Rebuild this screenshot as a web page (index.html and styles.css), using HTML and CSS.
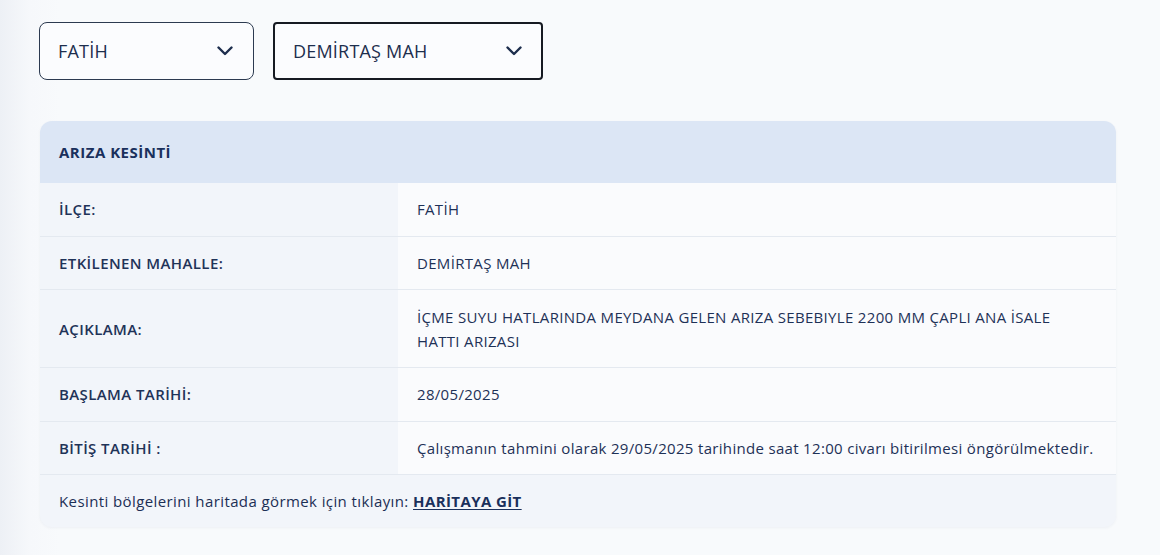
FILE: index.html
```html
<!DOCTYPE html>
<html lang="tr">
<head>
<meta charset="utf-8">
<title>Arıza Kesinti</title>
<link rel="stylesheet" href="styles.css">
</head>
<body>
<main class="page">
  <div class="filters">
    <div class="select select-district">
      <span class="select-value">FATİH</span>
      <svg class="chevron" viewBox="0 0 16 10" width="16" height="10"><path d="M1.5 1.5 L8 8 L14.5 1.5" fill="none" stroke="#1d2e4d" stroke-width="2.4" stroke-linecap="round" stroke-linejoin="round"/></svg>
    </div>
    <div class="select select-hood">
      <span class="select-value">DEMİRTAŞ MAH</span>
      <svg class="chevron" viewBox="0 0 16 10" width="16" height="10"><path d="M1.5 1.5 L8 8 L14.5 1.5" fill="none" stroke="#1d2e4d" stroke-width="2.4" stroke-linecap="round" stroke-linejoin="round"/></svg>
    </div>
  </div>

  <section class="card">
    <div class="card-head">ARIZA KESİNTİ</div>
    <div class="row">
      <div class="label">İLÇE:</div>
      <div class="value">FATİH</div>
    </div>
    <div class="row">
      <div class="label">ETKİLENEN MAHALLE:</div>
      <div class="value">DEMİRTAŞ MAH</div>
    </div>
    <div class="row row-tall">
      <div class="label">AÇIKLAMA:</div>
      <div class="value">İÇME SUYU HATLARINDA MEYDANA GELEN ARIZA SEBEBIYLE 2200 MM ÇAPLI ANA İSALE HATTI ARIZASI</div>
    </div>
    <div class="row">
      <div class="label">BAŞLAMA TARİHİ:</div>
      <div class="value">28/05/2025</div>
    </div>
    <div class="row">
      <div class="label">BİTİŞ TARİHİ :</div>
      <div class="value">Çalışmanın tahmini olarak 29/05/2025 tarihinde saat 12:00 civarı bitirilmesi öngörülmektedir.</div>
    </div>
    <div class="card-foot">Kesinti bölgelerini haritada görmek için tıklayın: <a class="map-link" href="#">HARİTAYA GİT</a></div>
  </section>
</main>
</body>
</html>
```

FILE: styles.css
```css
html, body {
  margin: 0;
  height: 100%;
}

body {
  background: linear-gradient(90deg, #edf0f5 0px, #f6f8fb 30px, #f8fafc 60px);
  font-family: "Open Sans", "Noto Sans", sans-serif;
  color: #1c2f55;
}

.page {
  padding: 22px 44px 0 39px;
}

.filters {
  display: flex;
  gap: 19px;
}

.select {
  box-sizing: border-box;
  height: 58px;
  display: flex;
  align-items: center;
  justify-content: space-between;
  background: #fbfcfe;
  font-size: 18px;
  letter-spacing: 0.2px;
  color: #1d2e4d;
}

.select-district {
  width: 215px;
  border: 1px solid #2c3a50;
  border-radius: 8px;
  padding: 0 20px 0 18px;
}

.select-hood {
  width: 270px;
  border: 2px solid #161a22;
  border-radius: 4px;
  padding: 0 19px 0 18px;
}

.chevron {
  display: block;
}

.card {
  margin: 41px 0 0 1px;
  width: 1076px;
  border-radius: 12px;
  overflow: hidden;
  background: #f2f5fa;
  box-shadow: 0 1px 3px rgba(40, 60, 100, 0.05);
  letter-spacing: 0.32px;
}

.card-head {
  height: 62px;
  display: flex;
  align-items: center;
  padding-left: 19px;
  background: #dce6f5;
  font-size: 15px;
  font-weight: 700;
  letter-spacing: 0.5px;
  color: #1a305c;
}

.row {
  box-sizing: border-box;
  display: grid;
  grid-template-columns: 358px 1fr;
  min-height: 53.5px;
  border-bottom: 1px solid #e4e9f0;
}

.row-tall {
  min-height: 78px;
}

.label,
.value {
  display: flex;
  align-items: center;
  font-size: 15px;
  line-height: 24px;
}

.label {
  padding-left: 19px;
  font-weight: 600;
  letter-spacing: 0.4px;
  color: #1f3358;
}

.value {
  padding: 0 20px 0 19px;
  background: #fafbfd;
  color: #1e3157;
}

.card-foot {
  height: 52px;
  display: flex;
  align-items: center;
  padding-left: 19px;
  font-size: 15px;
  letter-spacing: 0.4px;
  color: #1c2f55;
  white-space: pre;
}

.map-link {
  color: #1a305c;
  font-weight: 700;
  text-decoration: underline;
  text-underline-offset: 2px;
}
```
